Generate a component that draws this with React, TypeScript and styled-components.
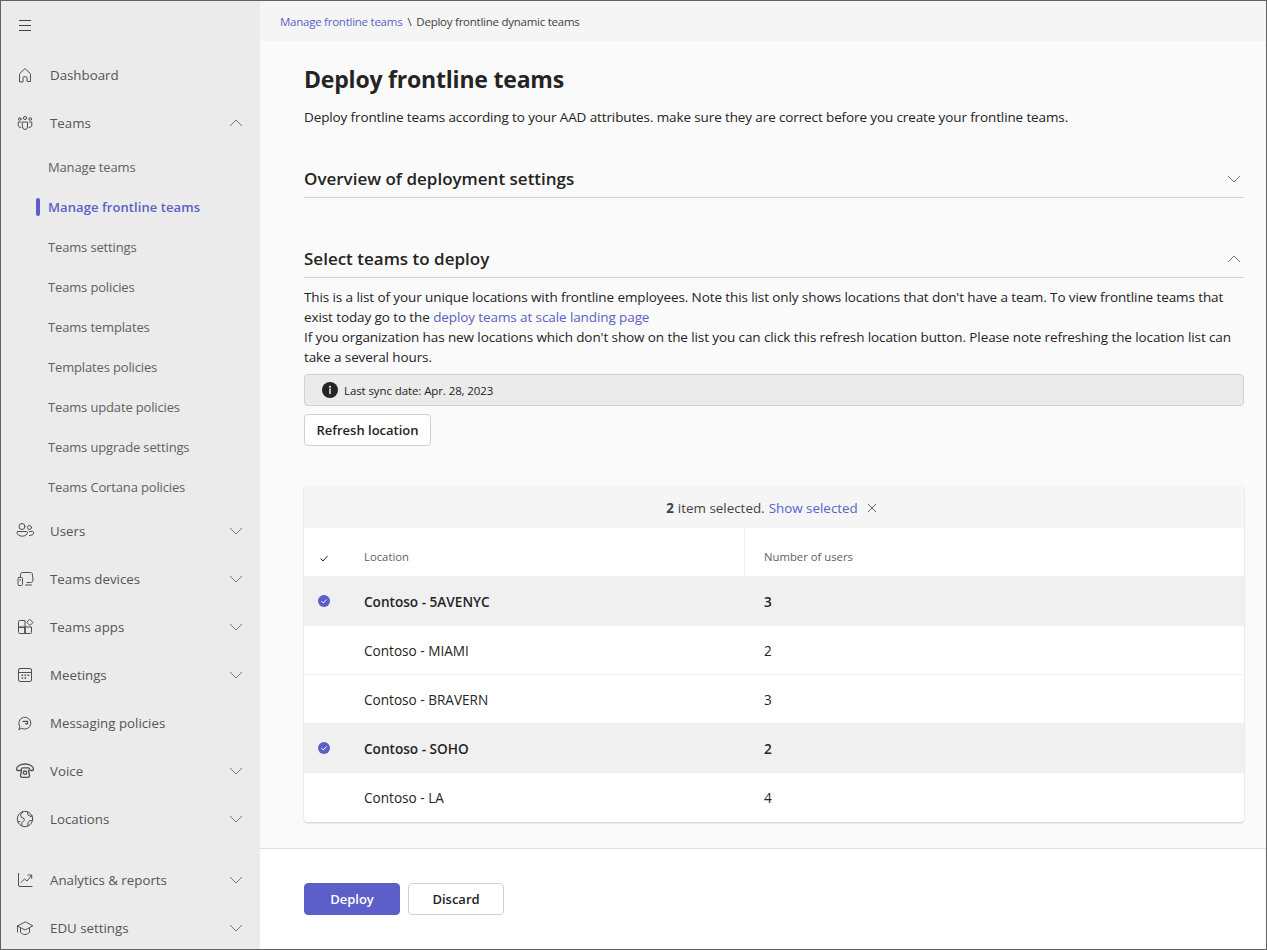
import React from "react";
import styled, { createGlobalStyle } from "styled-components";

const FONT = `"Open Sans", "Noto Sans", "Liberation Sans", sans-serif`;

const Global = createGlobalStyle`
  html, body { margin: 0; padding: 0; background: #fff; }
  * { box-sizing: border-box; }
  body { font-family: ${FONT}; color: #242424; }
`;

const Frame = styled.div`
  width: 1267px; height: 950px; display: flex; overflow: hidden;
  border: 1px solid #616161;
`;
const Sidebar = styled.nav`
  width: 259px; flex: none; background: #ebebeb; display: flex; flex-direction: column; overflow: hidden;
`;
const Burger = styled.div`
  height: 50px; flex: none; padding: 17px 0 0 17px; display: flex; align-items: flex-start; color: #424242;
`;
const NavItem = styled.div<{ $gapTop?: number }>`
  height: 48px; flex: none; display: flex; align-items: center; padding: 0 16px 0 14px; color: #555;
  font-size: 13.3px; margin-top: ${p => p.$gapTop ?? 0}px;
`;
const NavIcon = styled.span`
  width: 20px; height: 20px; margin-right: 15px; display: flex; align-items: center; justify-content: center; color: #505050; flex: none;
`;
const NavLabel = styled.span`flex: 1; white-space: nowrap;`;
const SubList = styled.div`display: flex; flex-direction: column; flex: none;`;
const SubItem = styled.div<{ $active?: boolean }>`
  height: 40px; display: flex; align-items: center; padding-left: 47px; position: relative; white-space: nowrap;
  font-size: 13px; letter-spacing: ${p => (p.$active ? "0.08px" : "-0.15px")}; font-weight: ${p => (p.$active ? 600 : 400)};
  color: ${p => (p.$active ? "#5b5fc7" : "#616161")};
`;
const ActiveMark = styled.span`
  position: absolute; left: 35px; top: 11px; width: 4px; height: 18px; border-radius: 2px; background: #5b5fc7;
`;
const Main = styled.div`flex: 1; min-width: 0; display: flex; flex-direction: column; background: #fafafa;`;
const Crumbs = styled.div`
  height: 40px; flex: none; background: #f5f5f5; display: flex; align-items: center; padding-left: 20px;
  font-size: 11.5px; letter-spacing: -0.25px; color: #424242; gap: 5px;
`;
const CrumbLink = styled.span`color: #5b5fc7;`;
const Content = styled.div`flex: 1; padding: 0 22px 0 44px; min-height: 0;`;
const Title = styled.h1`
  margin: 20px 0 0; font-size: 23px; line-height: 36px; font-weight: 700; color: #242424; letter-spacing: -0.2px;
`;
const Desc = styled.p`margin: 10px 0 0; font-size: 13.5px; line-height: 20px; letter-spacing: -0.12px;`;
const Section = styled.div<{ $mt: number }>`
  margin-top: ${p => p.$mt}px; height: 37px; display: flex; align-items: center; justify-content: space-between;
  border-bottom: 1px solid #d1d1d1; padding: 0 2px 1px 0;
`;
const SectionTitle = styled.h2`margin: 0; font-size: 17px; line-height: 24px; font-weight: 600;`;
const Chevron = styled.span`color: #757575; display: flex;`;
const Body = styled.p`margin: 9px 0 0; font-size: 13.5px; line-height: 20px; letter-spacing: -0.1px;`;
const Link = styled.span`color: #5b5fc7;`;
const Notice = styled.div`
  margin-top: 7px; height: 32px; background: #ebebeb; border: 1px solid #d1d1d1; border-radius: 4px;
  display: flex; align-items: center; padding-left: 17px; font-size: 11.5px; letter-spacing: -0.1px; gap: 6px;
`;
const Button = styled.button<{ $primary?: boolean; $w?: number }>`
  height: 32px; width: ${p => (p.$w ? `${p.$w}px` : "auto")}; padding: 0; border-radius: 4px;
  border: 1px solid ${p => (p.$primary ? "#5b5fc7" : "#d1d1d1")};
  background: ${p => (p.$primary ? "#5b5fc7" : "#fff")}; color: ${p => (p.$primary ? "#fff" : "#242424")};
  font-family: ${FONT}; font-size: 13px; font-weight: 600;
  display: flex; align-items: center; justify-content: center;
`;
const RefreshWrap = styled.div`margin-top: 8px;`;
const Table = styled.div`
  margin-top: 40px; width: 940px; background: #fff; border-radius: 4px; overflow: hidden;
  box-shadow: 0 1px 2px rgba(0,0,0,.2), 0 0 1px rgba(0,0,0,.06);
`;
const SelectBar = styled.div`
  height: 42px; background: #f5f5f5; display: flex; align-items: center; justify-content: center;
  font-size: 13.4px; gap: 4px; color: #424242; padding: 1px 4px 0 0;
`;
const Strong = styled.b`font-weight: 700;`;
const Close = styled.span`display: flex; margin-left: 4px; color: #616161;`;
const HeadRow = styled.div`
  height: 49px; display: grid; grid-template-columns: 60px 380px 1fr; align-items: center; border-bottom: 1px solid #f0f0f0;
  font-size: 11.3px; color: #616161;
`;
const CheckCell = styled.div`display: flex; padding: 11px 0 0 15px;`;
const HeadCell = styled.div<{ $divider?: boolean }>`
  height: 100%; display: flex; align-items: center; padding-top: 8px;
  ${p => (p.$divider ? "border-left: 1px solid #f0f0f0; padding-left: 19px;" : "")}
`;
const Row = styled.div<{ $sel?: boolean }>`
  height: 49px; display: grid; grid-template-columns: 60px 380px 1fr; align-items: center; padding-top: 1px;
  border-bottom: 1px solid #f0f0f0; font-size: 13.6px;
  background: ${p => (p.$sel ? "#f0f0f0" : "#fff")}; font-weight: ${p => (p.$sel ? 600 : 400)};
  &:last-child { border-bottom-color: transparent; }
`;
const RowCheck = styled.div`display: flex; padding: 0 0 2px 14px;`;
const NumCell = styled.div`padding-left: 20px;`;
const Footer = styled.div`
  height: 101px; flex: none; background: #fff; border-top: 1px solid #e0e0e0; padding: 34px 0 0 44px; display: flex; gap: 8px;
`;

const I: React.FC<{ children: React.ReactNode; w?: number }> = ({ children, w = 1 }) => (
  <svg width={20} height={20} viewBox="0 0 20 20" fill="none" stroke="currentColor" strokeWidth={w} strokeLinecap="round" strokeLinejoin="round">
    {children}
  </svg>
);
const Down = () => <svg width="16" height="16" viewBox="0 0 16 16" fill="none" stroke="currentColor" strokeWidth="1"><path d="M2 5 8 11l6-6" /></svg>;
const Up = () => <svg width="16" height="16" viewBox="0 0 16 16" fill="none" stroke="currentColor" strokeWidth="1"><path d="M2 11 8 5l6 6" /></svg>;

const Home = () => <I><path d="M4.500 16.500V9.200a1 1 0 0 1 .35-.75L9.300 4.200a1 1 0 0 1 1.400 0l4.450 4.250a1 1 0 0 1 .35.75v7.300h-3.500v-3.700a1 1 0 0 0-1-1h-2a1 1 0 0 0-1 1v3.700z" /></I>;
const Teams = () => <I><circle cx="10" cy="5" r="1.600" /><circle cx="4.800" cy="6" r="1.300" /><circle cx="15.200" cy="6" r="1.300" /><path d="M7.500 9h5v5a2.500 2.500 0 0 1-5 0zM5.500 9H3.200v3.200c0 1.400 1 2.200 2.800 2.200M14.500 9h2.300v3.200c0 1.400-1 2.200-2.800 2.200" /></I>;
const Users = () => <I><circle cx="7" cy="5.500" r="3" /><circle cx="14.500" cy="6.500" r="2" /><path d="M3 10.500h8.500a1 1 0 0 1 1 1c0 2-2.200 3.700-5.200 3.700S2 13.500 2 11.500a1 1 0 0 1 1-1zM14.500 14.500c2.700 0 4-1.200 4-2.800a1 1 0 0 0-1-1.200H14.500" /></I>;
const Devices = () => <I><path d="M5.500 8V5.500a2 2 0 0 1 2-2h8c1 0 1.700.7 1.800 1.500l.7 6c.1 1.500-.8 2.500-2.300 2.500H12" /><rect x="3" y="8.500" width="4.500" height="8" rx="1" /><path d="M5.200 10.500v1M10.500 16h6" /></I>;
const Apps = () => <I><path d="M10 10V3.500H4.500a1 1 0 0 0-1 1V10zM10 10H3.500v5.500a1 1 0 0 0 1 1H10zM10 10h6.500v5.500a1 1 0 0 1-1 1H10zM15 2.500l3 3-3 3-3-3z" /></I>;
const Meetings = () => <I><rect x="3.500" y="3.500" width="13" height="13" rx="1.500" /><path d="M3.500 7.500h13" /><path d="M7 10.200h.6M10 10.200h.6M13 10.200h.6M7 13h.6M10 13h.6" strokeWidth="1.400" /></I>;
const Msg = () => <I><path d="M4 16.300l.8-2.800A6 6 0 1 1 7 15.500z" /><path d="M8 8.300h4.500v2.500H10.500" strokeWidth="1.300" /></I>;
const Voice = () => <I w={1.300}><path d="M1.500 8.500C1.300 5 5.500 3 10 3s8.700 2 8.500 5.500c0 .8-.7 1-1.300 1h-1.700c-.7 0-1-.5-1-1.500 0-.8-.6-1.200-1.200-1.200H7.700c-.6 0-1.200.4-1.200 1.200 0 1-.3 1.500-1 1.500H2.800c-.6 0-1.300-.2-1.300-1z" /><path d="M6.500 9.500 5.500 14.500a1.500 1.500 0 0 0 1.500 1.800h6a1.500 1.500 0 0 0 1.500-1.800l-1-5" /><circle cx="10" cy="11.700" r="1.700" /></I>;
const Globe = () => <I><circle cx="10" cy="10" r="7.700" /><path d="M8 2.800 5.500 6 6.500 8.500l2 .5 1 2-2.500 2.500-.2 2.800M3 13l2-.5M12.500 3 13 6l3 1.500 1.500-.5M17.500 11.500l-3 .2-1.500 2-.2 3" /></I>;
const Chart = () => <I><path d="M3.500 3.500V15a1.500 1.500 0 0 0 1.500 1.500h12" /><path d="M6 12.500l3.500-3.500 2.500 2L16.500 5.500M13 5h3.700v3.500" /></I>;
const Edu = () => <I><path d="M10 4 2.500 8 10 12l7.500-4z" /><path d="M5.500 10v4.200c1 1.500 2.700 2.300 4.500 2.300s3.500-.8 4.500-2.300V10M2.500 8v6" /></I>;

const Selected = () => (
  <svg width="12" height="12" viewBox="0 0 12 12">
    <circle cx="6" cy="6" r="6" fill="#5b5fc7" />
    <path d="M3.500 6.200 5.300 8l3.300-3.500" fill="none" stroke="#fff" strokeWidth="1" />
  </svg>
);

const rows = [
  { n: "Contoso - 5AVENYC", c: 3, s: true },
  { n: "Contoso - MIAMI", c: 2 },
  { n: "Contoso - BRAVERN", c: 3 },
  { n: "Contoso - SOHO", c: 2, s: true },
  { n: "Contoso - LA", c: 4 },
];
const subs = ["Manage teams", "Manage frontline teams", "Teams settings", "Teams policies", "Teams templates", "Templates policies", "Teams update policies", "Teams upgrade settings", "Teams Cortana policies"];

export default function App() {
  const nav = (icon: React.ReactNode, label: string, chev: "up" | "down" | null, gap?: number) => (
    <NavItem $gapTop={gap}>
      <NavIcon>{icon}</NavIcon>
      <NavLabel>{label}</NavLabel>
      {chev && <Chevron>{chev === "up" ? <Up /> : <Down />}</Chevron>}
    </NavItem>
  );
  return (
    <Frame>
      <Global />
      <Sidebar>
        <Burger>
          <svg width="14" height="14" viewBox="0 0 14 14" stroke="currentColor" strokeWidth="1"><path d="M1 2.500h12M1 7.500h12M1 12.500h12" /></svg>
        </Burger>
        {nav(<Home />, "Dashboard", null)}
        {nav(<Teams />, "Teams", "up")}
        <SubList>
          {subs.map(s => (
            <SubItem key={s} $active={s === "Manage frontline teams"}>
              {s === "Manage frontline teams" && <ActiveMark />}
              {s}
            </SubItem>
          ))}
        </SubList>
        {nav(<Users />, "Users", "down")}
        {nav(<Devices />, "Teams devices", "down")}
        {nav(<Apps />, "Teams apps", "down")}
        {nav(<Meetings />, "Meetings", "down")}
        {nav(<Msg />, "Messaging policies", null)}
        {nav(<Voice />, "Voice", "down")}
        {nav(<Globe />, "Locations", "down")}
        {nav(<Chart />, "Analytics & reports", "down", 13)}
        {nav(<Edu />, "EDU settings", "down")}
      </Sidebar>
      <Main>
        <Crumbs>
          <CrumbLink>Manage frontline teams</CrumbLink>
          <span>\</span>
          <span>Deploy frontline dynamic teams</span>
        </Crumbs>
        <Content>
          <Title>Deploy frontline teams</Title>
          <Desc>Deploy frontline teams according to your AAD attributes. make sure they are correct before you create your frontline teams.</Desc>
          <Section $mt={34}>
            <SectionTitle>Overview of deployment settings</SectionTitle>
            <Chevron><Down /></Chevron>
          </Section>
          <Section $mt={43}>
            <SectionTitle>Select teams to deploy</SectionTitle>
            <Chevron><Up /></Chevron>
          </Section>
          <Body>
            This is a list of your unique locations with frontline employees. Note this list only shows locations that don't have a team. To view frontline teams that exist today go to the <Link>deploy teams at scale landing page</Link>
            <br />
            If you organization has new locations which don't show on the list you can click this refresh location button. Please note refreshing the location list can take a several hours.
          </Body>
          <Notice>
            <svg width="16" height="16" viewBox="0 0 16 16">
              <circle cx="8" cy="8" r="8" fill="#242424" />
              <path d="M8 7v4.500" stroke="#fff" strokeWidth="1.400" strokeLinecap="round" />
              <circle cx="8" cy="4.800" r="1" fill="#fff" />
            </svg>
            <span>Last sync date: Apr. 28, 2023</span>
          </Notice>
          <RefreshWrap>
            <Button $w={127}>Refresh location</Button>
          </RefreshWrap>
          <Table>
            <SelectBar>
              <Strong>2</Strong> item selected. <Link>Show selected</Link>
              <Close>
                <svg width="12" height="12" viewBox="0 0 12 12" stroke="currentColor" strokeWidth="1"><path d="M2 2l8 8M10 2l-8 8" /></svg>
              </Close>
            </SelectBar>
            <HeadRow>
              <CheckCell>
                <svg width="10" height="10" viewBox="0 0 10 10" fill="none" stroke="#242424" strokeWidth="1"><path d="M1.500 5.500 4 8l4.500-5" /></svg>
              </CheckCell>
              <HeadCell>Location</HeadCell>
              <HeadCell $divider>Number of users</HeadCell>
            </HeadRow>
            {rows.map(r => (
              <Row key={r.n} $sel={r.s}>
                <RowCheck>{r.s && <Selected />}</RowCheck>
                <div>{r.n}</div>
                <NumCell>{r.c}</NumCell>
              </Row>
            ))}
          </Table>
        </Content>
        <Footer>
          <Button $primary $w={96}>Deploy</Button>
          <Button $w={96}>Discard</Button>
        </Footer>
      </Main>
    </Frame>
  );
}
